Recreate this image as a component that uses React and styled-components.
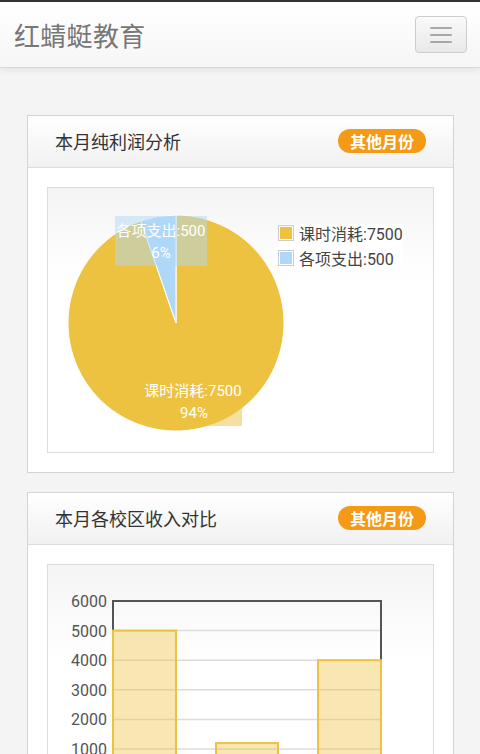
import React from 'react'
import styled, { createGlobalStyle } from 'styled-components'

const GlobalStyle = createGlobalStyle`
  body {
    margin: 0;
    background: #f4f4f4;
    font-family: Roboto, "Noto Sans CJK SC", sans-serif;
  }
`

const Navbar = styled.div`
  height: 65px;
  border-top: 2px solid #333;
  border-bottom: 1px solid #d6d6d6;
  background: linear-gradient(to bottom, #ffffff 0%, #f6f6f6 100%);
  box-shadow: 0 2px 8px rgba(0, 0, 0, 0.07);
  display: flex;
  align-items: center;
  justify-content: space-between;
  padding: 0 13px 0 14px;
`

const Brand = styled.div`
  font-size: 26px;
  color: #777;
  letter-spacing: 0.3px;
`

const MenuButton = styled.div`
  width: 50px;
  height: 35px;
  border: 1px solid #ccc;
  border-radius: 4px;
  background: linear-gradient(to bottom, #f9f9f9 0%, #e9e9e9 100%);
  display: flex;
  flex-direction: column;
  align-items: center;
  justify-content: center;
  gap: 5px;
  box-shadow: inset 0 1px 0 rgba(255, 255, 255, 0.6);
`

const IconBar = styled.span`
  display: block;
  width: 22px;
  height: 2px;
  border-radius: 1px;
  background: #a8a8a8;
`

const Main = styled.div`
  padding: 47px 26px 40px 27px;
  display: flex;
  flex-direction: column;
  gap: 19px;
`

const Panel = styled.div`
  border: 1px solid #d4d4d4;
  background: #fff;
`

const PanelHeading = styled.div`
  height: 51px;
  border-bottom: 1px solid #dcdcdc;
  background: linear-gradient(to bottom, #ffffff 0%, #f1f1f1 100%);
  display: flex;
  align-items: center;
  justify-content: space-between;
  padding: 0 27px 2px 27px;
  box-sizing: border-box;
  height: 52px;
`

const PanelTitle = styled.div`
  font-size: 18px;
  color: #333;
`

const Badge = styled.span`
  width: 88px;
  height: 24px;
  border-radius: 12px;
  background: #f49a16;
  color: #fff;
  font-weight: bold;
  font-size: 16px;
  display: flex;
  align-items: center;
  justify-content: center;
`

const PanelBody = styled.div`
  padding: 19px;
`

const ChartBox = styled.div`
  position: relative;
  height: 264px;
  border: 1px solid #dcdcdc;
  background: linear-gradient(to bottom, #f4f4f4 0%, #ffffff 35%, #ffffff 100%);
  overflow: hidden;

  svg {
    display: block;
  }
`

const Legend = styled.div`
  position: absolute;
  left: 230px;
  top: 36px;
  display: flex;
  flex-direction: column;
  gap: 7px;
  background: rgba(255, 255, 255, 0.85);
`

const LegendRow = styled.div`
  display: flex;
  align-items: center;
  gap: 5px;
  font-size: 16px;
  color: #444;
  height: 18px;
`

const Swatch = styled.span`
  border: 1px solid #ccc;
  padding: 1px;
  background: ${({ color }) => color};
  background-clip: content-box;
  box-sizing: content-box;
  width: 12px;
  height: 12px;
`

const YELLOW = '#edc240'
const BLUE = '#afd8f8'

const PieChart = () => {
  const cx = 128
  const cy = 135
  const r = 108
  const ang = (19 * Math.PI) / 180
  const ex = cx - r * Math.sin(ang)
  const ey = cy - r * Math.cos(ang)

  return (
    <ChartBox>
      <svg width="385" height="264">
        <path
          d={`M${cx},${cy} L${cx},${cy - r} A${r},${r} 0 1,1 ${ex},${ey} Z`}
          fill={YELLOW}
          stroke="#fff"
          strokeWidth="1"
        />
        <path
          d={`M${cx},${cy} L${ex},${ey} A${r},${r} 0 0,1 ${cx},${cy - r} Z`}
          fill={BLUE}
          stroke="#fff"
          strokeWidth="1"
        />
        <rect x="67" y="28" width="92" height="50" fill={BLUE} opacity="0.5" />
        <rect x="98" y="192" width="96" height="46" fill={YELLOW} opacity="0.5" />
        <g fill="#fff" fontSize="15" textAnchor="middle" fontFamily='Roboto, "Noto Sans CJK SC", sans-serif'>
          <text x="113" y="48">各项支出:500</text>
          <text x="113" y="70">6%</text>
          <text x="145" y="208">课时消耗:7500</text>
          <text x="146" y="230">94%</text>
        </g>
      </svg>
      <Legend>
        <LegendRow>
          <Swatch color={YELLOW} />
          课时消耗:7500
        </LegendRow>
        <LegendRow>
          <Swatch color={BLUE} />
          各项支出:500
        </LegendRow>
      </Legend>
    </ChartBox>
  )
}

const bars = [
  { x: 65, w: 63, value: 5000 },
  { x: 168, w: 62, value: 1200 },
  { x: 270, w: 63, value: 4000 },
]

const BarChart = () => {
  const top = 36
  const step = 29.6
  const zero = top + step * 6
  const left = 65
  const right = 333
  const ticks = [6000, 5000, 4000, 3000, 2000, 1000, 0]

  return (
    <ChartBox>
      <svg width="385" height="264">
        {ticks.slice(1).map((t, i) => (
          <line
            key={t}
            x1={left}
            x2={right}
            y1={top + step * (i + 1)}
            y2={top + step * (i + 1)}
            stroke="#dcdcdc"
            strokeWidth="1.5"
          />
        ))}
        <path
          d={`M${left},${zero} L${left},${top} L${right},${top} L${right},${zero}`}
          fill="none"
          stroke="#545454"
          strokeWidth="2"
        />
        {bars.map((b) => {
          const y = zero - (b.value / 1000) * step
          return (
            <rect
              key={b.x}
              x={b.x}
              y={y}
              width={b.w}
              height={zero - y}
              fill="rgba(237,194,64,0.4)"
              stroke={YELLOW}
              strokeWidth="2"
            />
          )
        })}
        <g fill="#545454" fontSize="16" textAnchor="end" fontFamily='Roboto, "Noto Sans CJK SC", sans-serif'>
          {ticks.map((t, i) => (
            <text key={t} x="59" y={top + step * i + 6}>
              {t}
            </text>
          ))}
        </g>
      </svg>
    </ChartBox>
  )
}

const App = () => {
  return (
    <>
      <GlobalStyle />
      <Navbar>
        <Brand>红蜻蜓教育</Brand>
        <MenuButton>
          <IconBar />
          <IconBar />
          <IconBar />
        </MenuButton>
      </Navbar>
      <Main>
        <Panel>
          <PanelHeading>
            <PanelTitle>本月纯利润分析</PanelTitle>
            <Badge>其他月份</Badge>
          </PanelHeading>
          <PanelBody>
            <PieChart />
          </PanelBody>
        </Panel>
        <Panel>
          <PanelHeading>
            <PanelTitle>本月各校区收入对比</PanelTitle>
            <Badge>其他月份</Badge>
          </PanelHeading>
          <PanelBody>
            <BarChart />
          </PanelBody>
        </Panel>
      </Main>
    </>
  )
}

export default App
